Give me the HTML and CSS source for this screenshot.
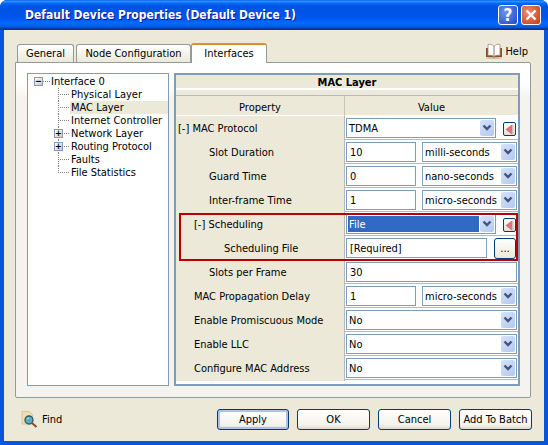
FILE: index.html
```html
<!DOCTYPE html>
<html lang="en">
<head>
<meta charset="UTF-8">
<title>Default Device Properties</title>
<link rel="stylesheet" href="styles.css">
</head>
<body>
<svg class="sprites" width="0" height="0">
    <symbol id="chevron" viewBox="0 0 14 16">
        <path d="M3.500 5.500 7 9 10.500 5.500" fill="none" stroke="#3f5680" stroke-width="2.400"/>
    </symbol>
    <symbol id="back" viewBox="0 0 9 11">
        <path d="M7 0.500V10.500L0.500 5.500Z" fill="#e4707c"/>
        <path d="M7 0.500V10.500H8.500V0.500Z" fill="#c8c4c0"/>
    </symbol>
</svg>

<div class="window">
    <div class="titlebar">
        <span class="title">Default Device Properties (Default Device 1)</span>
        <span class="cap-btn cap-help">?</span>
        <span class="cap-btn cap-close">
            <svg width="12" height="12" viewBox="0 0 12 12"><path d="M1.500 1.500 10.500 10.500M10.500 1.500 1.500 10.500" stroke="#fff" stroke-width="2.400"/></svg>
        </span>
    </div>

    <div class="client">
        <div class="tabs-row">
            <div class="tab">General</div>
            <div class="tab tab-node">Node Configuration</div>
            <div class="tab tab-active">Interfaces</div>
            <div class="help-link">
                <svg width="18" height="16" viewBox="0 0 18 16">
                    <ellipse cx="9" cy="15" rx="8" ry="1" fill="#c4bca8"/>
                    <path d="M1 5V14H8C8.500 14.600 9.500 14.600 10 14H17V5Z" fill="#8a4f24"/>
                    <path d="M9 3.500C7.500 1.500 5 1 3 1.500V12.500C5 12 7.500 12.300 9 13.500 10.500 12.300 13 12 15 12.500V1.500C13 1 10.500 1.500 9 3.500Z" fill="#fff" stroke="#9a8c78" stroke-width="0.800"/>
                    <path d="M9 3.500V13.500" stroke="#8c7a64"/>
                </svg>
                <span>Help</span>
            </div>
        </div>

        <div class="panel">
            <div class="tree">
                <div class="tree-root">
                    <span class="expander">&#8722;</span>
                    <span class="root-line"></span>
                    <span class="tree-label">Interface 0</span>
                </div>
                <div class="tree-row"><span class="elbow"></span><span class="tree-label">Physical Layer</span></div>
                <div class="tree-row selected"><span class="elbow"></span><span class="tree-label">MAC Layer</span></div>
                <div class="tree-row"><span class="elbow"></span><span class="tree-label">Internet Controller</span></div>
                <div class="tree-row"><span class="elbow"><span class="expander expander-child">+</span></span><span class="tree-label">Network Layer</span></div>
                <div class="tree-row"><span class="elbow"><span class="expander expander-child">+</span></span><span class="tree-label">Routing Protocol</span></div>
                <div class="tree-row"><span class="elbow"></span><span class="tree-label">Faults</span></div>
                <div class="tree-row"><span class="elbow elbow-last"></span><span class="tree-label">File Statistics</span></div>
            </div>

            <div class="props">
                <div class="props-title">MAC Layer</div>
                <div class="props-gap"></div>
                <div class="props-head">
                    <div class="head-cell">Property</div>
                    <div class="head-cell">Value</div>
                </div>

                <div class="row">
                    <div class="name">[-] MAC Protocol</div>
                    <div class="value">
                        <div class="combo grow"><span class="combo-text">TDMA</span><span class="combo-arrow"><svg width="14" height="16"><use href="#chevron"/></svg></span></div>
                        <span class="back-btn"><svg width="9" height="11"><use href="#back"/></svg></span>
                    </div>
                </div>
                <div class="row">
                    <div class="name indent-2">Slot Duration</div>
                    <div class="value">
                        <div class="field num">10</div>
                        <div class="combo unit"><span class="combo-text">milli-seconds</span><span class="combo-arrow"><svg width="14" height="16"><use href="#chevron"/></svg></span></div>
                    </div>
                </div>
                <div class="row">
                    <div class="name indent-2">Guard Time</div>
                    <div class="value">
                        <div class="field num">0</div>
                        <div class="combo unit"><span class="combo-text">nano-seconds</span><span class="combo-arrow"><svg width="14" height="16"><use href="#chevron"/></svg></span></div>
                    </div>
                </div>
                <div class="row">
                    <div class="name indent-2">Inter-frame Time</div>
                    <div class="value">
                        <div class="field num">1</div>
                        <div class="combo unit"><span class="combo-text">micro-seconds</span><span class="combo-arrow"><svg width="14" height="16"><use href="#chevron"/></svg></span></div>
                    </div>
                </div>

                <div class="highlight">
                    <div class="row">
                        <div class="name indent-1">[-] Scheduling</div>
                        <div class="value">
                            <div class="combo grow combo-focus"><span class="combo-text">File</span><span class="combo-arrow"><svg width="14" height="16"><use href="#chevron"/></svg></span></div>
                            <span class="back-btn"><svg width="9" height="11"><use href="#back"/></svg></span>
                        </div>
                    </div>
                    <div class="row">
                        <div class="name indent-3">Scheduling File</div>
                        <div class="value">
                            <div class="field grow">[Required]</div>
                            <span class="dots-btn">...</span>
                        </div>
                    </div>
                </div>

                <div class="row">
                    <div class="name indent-2">Slots per Frame</div>
                    <div class="value"><div class="field grow">30</div></div>
                </div>
                <div class="row">
                    <div class="name indent-1">MAC Propagation Delay</div>
                    <div class="value">
                        <div class="field num">1</div>
                        <div class="combo unit"><span class="combo-text">micro-seconds</span><span class="combo-arrow"><svg width="14" height="16"><use href="#chevron"/></svg></span></div>
                    </div>
                </div>
                <div class="row">
                    <div class="name indent-1">Enable Promiscuous Mode</div>
                    <div class="value">
                        <div class="combo grow"><span class="combo-text">No</span><span class="combo-arrow"><svg width="14" height="16"><use href="#chevron"/></svg></span></div>
                    </div>
                </div>
                <div class="row">
                    <div class="name indent-1">Enable LLC</div>
                    <div class="value">
                        <div class="combo grow"><span class="combo-text">No</span><span class="combo-arrow"><svg width="14" height="16"><use href="#chevron"/></svg></span></div>
                    </div>
                </div>
                <div class="row">
                    <div class="name indent-1">Configure MAC Address</div>
                    <div class="value">
                        <div class="combo grow"><span class="combo-text">No</span><span class="combo-arrow"><svg width="14" height="16"><use href="#chevron"/></svg></span></div>
                    </div>
                </div>
            </div>
        </div>

        <div class="footer">
            <div class="find">
                <svg width="17" height="17" viewBox="0 0 17 17">
                    <path d="M1 0.500H8.500L11.500 3.500V13H1Z" fill="#f0dfae" stroke="#d0c6a4"/>
                    <circle cx="8" cy="9" r="4" fill="#58aebc" stroke="#35556a" stroke-width="1.300"/>
                    <path d="M6 8A2 2 0 0 1 8 7" fill="none" stroke="#d8f0f0"/>
                    <path d="M11 12 15.500 16" stroke="#8a4b2a" stroke-width="2"/>
                </svg>
                <span>Find</span>
            </div>
            <div class="buttons">
                <button class="btn btn-default">Apply</button>
                <button class="btn">OK</button>
                <button class="btn">Cancel</button>
                <button class="btn">Add To Batch</button>
            </div>
        </div>
    </div>
</div>
</body>
</html>
```

FILE: styles.css
```css
/* Basic styling */
html, body {
    margin: 0;
    padding: 0;
    background-color: #fff;
}
body {
    font-family: "DejaVu Sans Condensed", "DejaVu Sans", sans-serif;
    font-stretch: condensed;
    font-size: 11px;
    color: #000;
}
.sprites {
    display: block;
    height: 0;
}

/* Window frame */
.window {
    width: 548px;
    height: 445px;
    box-sizing: border-box;
    display: flex;
    flex-direction: column;
    background-color: #0855dd;
    border-radius: 7px 7px 0 0;
    overflow: hidden;
}
.titlebar {
    height: 30px;
    flex: none;
    display: flex;
    align-items: center;
    padding: 0 7px 0 25px;
    background: linear-gradient(to bottom, #0058ee 0%, #3593ff 4%, #288eff 6%, #127dff 8%, #036ffc 10%, #0262ee 14%, #0057e5 20%, #0054e3 24%, #0055eb 56%, #005bf5 66%, #026afe 76%, #0062ef 86%, #0052d6 92%, #0040ab 94%, #003092 100%);
}
.title {
    flex: 1;
    color: #fff;
    font-weight: bold;
    font-size: 12px;
    text-shadow: 1px 1px 0 #0f1089;
    white-space: nowrap;
}
.cap-btn {
    width: 20px;
    height: 20px;
    box-sizing: border-box;
    margin-left: 3px;
    border: 1px solid #fff;
    border-radius: 3px;
    display: flex;
    align-items: center;
    justify-content: center;
    color: #fff;
    font-weight: bold;
    font-size: 17px;
}
.cap-help {
    background: radial-gradient(circle at 35% 35%, #6c93ee, #2148c8);
}
.cap-close {
    background: radial-gradient(circle at 35% 35%, #ec8d6c, #c63a18);
}

/* Dialog body */
.client {
    flex: 1;
    margin: 0 4px 4px 4px;
    padding: 13px 13px 0 11px;
    background-color: #ece9d8;
    display: flex;
    flex-direction: column;
}
.tabs-row {
    height: 19px;
    display: flex;
    align-items: flex-end;
    padding-left: 2px;
    position: relative;
    z-index: 1;
}
.tab {
    height: 18px;
    box-sizing: border-box;
    padding: 2px 0 0;
    width: 57px;
    margin-right: 2px;
    text-align: center;
    border: 1px solid #919b9c;
    border-bottom: none;
    border-radius: 3px 3px 0 0;
    background: linear-gradient(to bottom, #fff, #ece9d8);
}
.tab-node {
    width: 115px;
    margin-right: 0;
}
.tab-active {
    width: 76px;
    height: 20px;
    margin-bottom: -1px;
    background: #fff;
    border-top: 2px solid #e68b2c;
    margin-right: 0;
}
.help-link {
    margin-left: auto;
    margin-right: 3px;
    align-self: flex-start;
    display: flex;
    align-items: center;
    gap: 2px;
}

/* Tab page */
.panel {
    height: 336px;
    box-sizing: border-box;
    border: 1px solid #919b9c;
    border-radius: 0 2px 2px 2px;
    padding: 10px 10px 11px 11px;
    display: flex;
    gap: 5px;
    background: linear-gradient(to bottom, #fff 0, #fff 20px, #f4f3ee 36px);
}
.tree {
    width: 142px;
    box-sizing: border-box;
    border: 1px solid #7f9db9;
    background-color: #fff;
    padding: 1px 0 0 6px;
}
.tree-root, .tree-row {
    height: 13px;
    line-height: 13px;
    display: flex;
    align-items: center;
    white-space: nowrap;
}
.tree-row {
    padding-left: 24px;
}
.expander {
    width: 9px;
    height: 9px;
    box-sizing: border-box;
    flex: none;
    border: 1px solid #7f9db9;
    background: linear-gradient(135deg, #fff, #cfc9b4);
    display: flex;
    align-items: center;
    justify-content: center;
    font-size: 9px;
    line-height: 7px;
    font-weight: bold;
}
.root-line {
    width: 7px;
    height: 1px;
    background: repeating-linear-gradient(to right, #808080 0 1px, transparent 1px 2px);
}
.elbow {
    width: 12px;
    height: 13px;
    flex: none;
    display: flex;
    align-items: center;
    background:
        repeating-linear-gradient(to bottom, #808080 0 1px, transparent 1px 2px) left top / 1px 100% no-repeat,
        repeating-linear-gradient(to right, #808080 0 1px, transparent 1px 2px) left 6px / 100% 1px no-repeat;
}
.elbow-last {
    background:
        repeating-linear-gradient(to bottom, #808080 0 1px, transparent 1px 2px) left top / 1px 7px no-repeat,
        repeating-linear-gradient(to right, #808080 0 1px, transparent 1px 2px) left 6px / 100% 1px no-repeat;
}
.expander-child {
    margin-left: -4px;
}
.tree-label {
    padding: 0 1px;
    flex: 1;
}
.selected .tree-label {
    background-color: #ece9d8;
}

/* Property grid */
.props {
    flex: 1;
    min-width: 0;
    box-sizing: border-box;
    border: 2px solid #7f9db9;
    background-color: #fff;
}
.props-title {
    height: 13px;
    line-height: 15px;
    text-align: center;
    font-weight: bold;
    background-color: #ece9d8;
}
.props-gap {
    height: 2px;
}
.props-head {
    display: grid;
    grid-template-columns: 169px minmax(0, 1fr);
    height: 26px;
    box-sizing: border-box;
    background-color: #ece9d8;
    padding-top: 5px;
    border-bottom: 1px solid #fff;
}
.head-cell {
    text-align: center;
    line-height: 23px;
    border-top: 1px solid #b5b8bd;
}
.head-cell:first-child {
    border-right: 1px solid #c8c5b4;
}
.row {
    display: grid;
    grid-template-columns: 169px minmax(0, 1fr);
    height: 24px;
    box-sizing: border-box;
    border-bottom: 1px solid #b5b8bd;
}
.name {
    background-color: #ece9d8;
    line-height: 25px;
    padding-left: 2px;
    white-space: nowrap;
    border-right: 1px solid #b5b8bd;
}
.indent-1 {
    padding-left: 18px;
}
.indent-2 {
    padding-left: 33px;
}
.indent-3 {
    padding-left: 48px;
}
.value {
    display: flex;
    align-items: flex-start;
    padding: 2px 1px 0 1px;
    gap: 6px;
}
.field, .combo {
    height: 20px;
    line-height: 20px;
    box-sizing: border-box;
    border: 1px solid #7f9db9;
    background-color: #fff;
    white-space: nowrap;
}
.field {
    padding-left: 3px;
}
.num {
    width: 70px;
    flex: none;
}
.grow {
    flex: 1;
    min-width: 0;
}
.combo {
    display: flex;
    padding: 1px;
    line-height: 18px;
}
.unit {
    flex: 1;
    min-width: 0;
}
.combo-text {
    flex: 1;
    padding-left: 1px;
    overflow: hidden;
}
.combo-focus .combo-text {
    background-color: #316ac5;
    color: #fff;
}
.combo-arrow {
    width: 14px;
    height: 16px;
    flex: none;
    margin-left: 1px;
    background: linear-gradient(135deg, #d6e2f8, #b4c8f0);
    border-radius: 2px;
}
.combo-arrow svg, .back-btn svg {
    display: block;
}
.back-btn {
    width: 13px;
    height: 14px;
    flex: none;
    box-sizing: border-box;
    margin: 4px 1px 0 1px;
    border: 1px solid #003c74;
    border-radius: 2px;
    background: linear-gradient(to bottom, #fff, #e4e0d0);
    display: flex;
    align-items: center;
    justify-content: center;
}
.dots-btn {
    width: 22px;
    height: 21px;
    flex: none;
    box-sizing: border-box;
    margin: 0 1px 0 1px;
    border: 1px solid #003c74;
    border-radius: 3px;
    background: linear-gradient(to bottom, #fff, #ece9d8);
    text-align: center;
    line-height: 19px;
}

/* Red marker round the scheduling rows */
.highlight {
    position: relative;
}
.highlight::after {
    content: "";
    position: absolute;
    top: 1px;
    left: 3px;
    right: 0;
    bottom: -1px;
    border: 2px solid #b90000;
    pointer-events: none;
}

/* Bottom bar */
.footer {
    display: flex;
    align-items: center;
    justify-content: space-between;
    height: 42px;
    padding: 0 0 0 6px;
}
.find {
    display: flex;
    align-items: center;
    gap: 4px;
}
.buttons {
    display: flex;
    gap: 8px;
    margin-right: -1px;
}
.btn {
    width: 73px;
    height: 21px;
    padding: 0;
    font: inherit;
    color: #000;
    border: 1px solid #003c74;
    border-radius: 3px;
    background: linear-gradient(to bottom, #fff, #f3f2ea 80%, #dcd8c8);
}
.btn-default {
    width: 72px;
    box-shadow: inset 0 0 0 2px #a9c2ee;
}
```
